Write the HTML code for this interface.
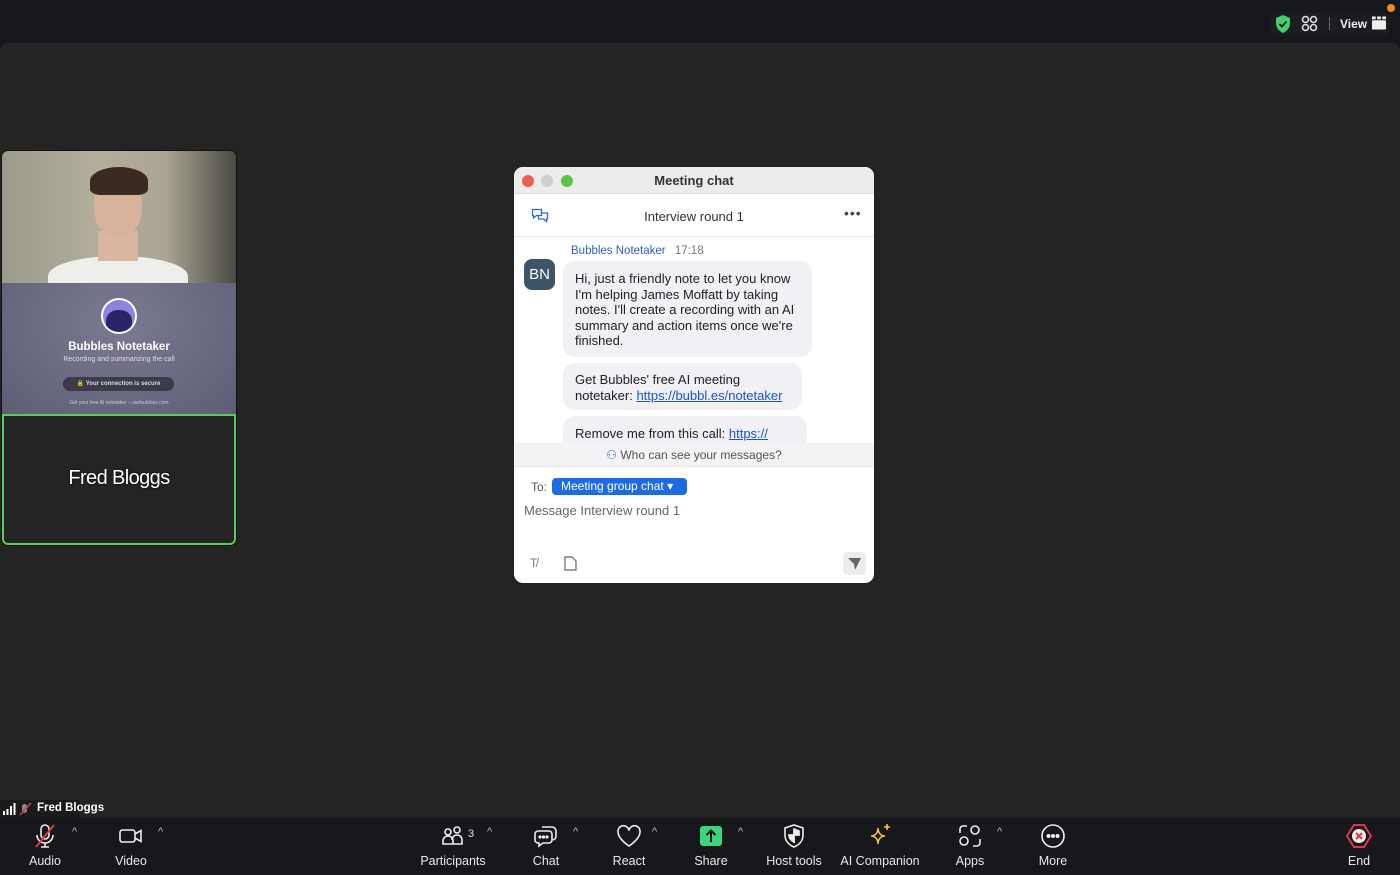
<!DOCTYPE html>
<html><head><meta charset="utf-8"><style>
*{box-sizing:border-box;margin:0;padding:0}
body{width:1400px;height:875px;background:#17181b;font-family:"Liberation Sans",sans-serif;position:relative;overflow:hidden;color:#fff}
.main{position:absolute;left:0;top:43px;width:1400px;height:775px;background:#242424;border-radius:8px 8px 0 0}
.abs{position:absolute}
.tb{position:absolute;top:818px;left:0;width:1400px;height:57px;background:#17181b}
.btn{position:absolute;top:822px;text-align:center;font-size:12.5px;color:#e8e8e8}
.btn svg{display:block;margin:0 auto 4px}
.car{position:absolute;top:826px;color:#bbb;font-size:11px}
.chat{position:absolute;left:514px;top:167px;width:360px;height:416px;background:#fff;border-radius:9px;overflow:hidden;color:#222}
.bub{position:absolute;left:49px;background:#f0f0f5;border-radius:12px;padding:0 12px;font-size:13px;line-height:15.5px;color:#222}
a{color:#1a55c9;text-decoration:underline}
</style></head><body>
<div class="main"></div>
<div class="abs" style="left:1271px;top:12px;width:118px;height:24px;background:#1c1d20;border-radius:6px"></div>
<svg class="abs" style="left:1274px;top:14px" width="18" height="20" viewBox="0 0 18 20"><path d="M9 1L16 4v5c0 5-3 8-7 10C5 17 2 14 2 9V4z" fill="#3ecf6e"/><path d="M5.5 10l2.5 2.5 4.5-5" stroke="#111" stroke-width="1.8" fill="none"/></svg>
<svg class="abs" style="left:1301px;top:15px" width="17" height="17" viewBox="0 0 17 17" fill="none" stroke="#ddd" stroke-width="1.6"><circle cx="4.5" cy="4.5" r="3"/><circle cx="12.5" cy="4.5" r="3"/><circle cx="4.5" cy="12.5" r="3"/><circle cx="12.5" cy="12.5" r="3"/></svg>
<div class="abs" style="left:1329px;top:17px;width:1px;height:13px;background:#666"></div>
<div class="abs" style="left:1340px;top:17px;font-size:12px;font-weight:bold;color:#eee">View</div>
<svg class="abs" style="left:1372px;top:16px" width="14" height="14" viewBox="0 0 15 14"><rect x="0" y="4" width="15" height="10" rx="1" fill="#eee"/><rect x="0" y="0" width="4" height="3" fill="#eee"/><rect x="5.5" y="0" width="4" height="3" fill="#eee"/><rect x="11" y="0" width="4" height="3" fill="#eee"/></svg>
<div class="abs" style="left:1387px;top:4px;width:8px;height:8px;border-radius:50%;background:#f08a24"></div>
<div class="abs" style="left:1px;top:150px;width:236px;height:396px;background:#111;border-radius:7px"></div>
<div class="abs" style="left:2px;top:151px;width:234px;height:132px;border-radius:6px 6px 0 0;overflow:hidden;background:linear-gradient(90deg,#9a9a8c,#b3ae9c 40%,#aaa594 70%,#4a4a44)">
 <div class="abs" style="left:46px;top:105px;width:140px;height:40px;border-radius:50% 50% 0 0;background:#eeeeea"></div>
 <div class="abs" style="left:96px;top:80px;width:40px;height:30px;background:#d9b6a0"></div>
 <div class="abs" style="left:92px;top:24px;width:48px;height:62px;border-radius:45%;background:#d9b29c"></div>
 <div class="abs" style="left:88px;top:16px;width:58px;height:28px;border-radius:50% 50% 20% 20%;background:#3a2a22"></div>
</div>
<div class="abs" style="left:2px;top:283px;width:234px;height:131px;background:radial-gradient(ellipse at 50% 30%,#7b7a92,#5e5d76)"></div>
<div class="abs" style="left:101px;top:298px;width:36px;height:36px;border-radius:50%;background:#fff"></div>
<div class="abs" style="left:103px;top:300px;width:32px;height:32px;border-radius:50%;background:#8f83e0;overflow:hidden"><div class="abs" style="left:3px;top:10px;width:26px;height:24px;border-radius:45%;background:#2a2566"></div></div>
<div class="abs" style="left:2px;top:341px;width:234px;text-align:center;font-size:11.5px;font-weight:bold">Bubbles Notetaker</div>
<div class="abs" style="left:2px;top:356px;width:234px;text-align:center;font-size:7px;color:#ddd">Recording and summarizing the call</div>
<div class="abs" style="left:63px;top:377px;width:111px;height:14px;border-radius:7px;background:#3b3b4c;font-size:6px;font-weight:bold;color:#ddd;text-align:center;line-height:14px">🔒 Your connection is secure</div>
<div class="abs" style="left:2px;top:400px;width:234px;text-align:center;font-size:5px;color:#ccc">Get your free AI notetaker – <span style="color:#c8c0ff">usebubbles.com</span></div>
<div class="abs" style="left:2px;top:414px;width:234px;height:131px;background:#242424;border:2px solid #5ccb5f;border-radius:0 0 6px 6px"></div>
<div class="abs" style="left:2px;top:467px;width:234px;text-align:center;font-size:20px;letter-spacing:-0.6px;text-shadow:0 0 2px #000">Fred Bloggs</div>
<div class="abs" style="left:0;top:800px;width:80px;height:18px;background:#1b1b1b"></div>
<svg class="abs" style="left:3px;top:803px" width="30" height="12" viewBox="0 0 30 12"><rect x="0" y="8" width="2" height="4" fill="#fff"/><rect x="3.5" y="6" width="2" height="6" fill="#fff"/><rect x="7" y="3" width="2" height="9" fill="#fff"/><rect x="10.5" y="0" width="2" height="12" fill="#fff"/><rect x="19" y="1" width="5" height="9" rx="2.5" fill="#888"/><path d="M17 12L28 0" stroke="#e0364a" stroke-width="1.5"/></svg>
<div class="abs" style="left:37px;top:802px;font-size:11.5px;font-weight:bold">Fred Bloggs</div>
<div class="chat">
 <div class="abs" style="left:0;top:0;width:360px;height:27px;background:#ececec;border-bottom:1px solid #ddd"></div>
 <div class="abs" style="left:8px;top:8px;width:12px;height:12px;border-radius:50%;background:#ee5c55"></div>
 <div class="abs" style="left:27px;top:8px;width:12px;height:12px;border-radius:50%;background:#cfcfcf"></div>
 <div class="abs" style="left:47px;top:8px;width:12px;height:12px;border-radius:50%;background:#5ac543"></div>
 <div class="abs" style="left:0;top:6px;width:360px;text-align:center;font-size:13px;font-weight:bold;color:#333">Meeting chat</div>
 <svg class="abs" style="left:17px;top:40px" width="18" height="18" viewBox="0 0 18 18" fill="none" stroke="#2d6ad8" stroke-width="1.3"><path d="M1.5 2.5h9v6h-5l-3 2.5v-2.5h-1z"/><path d="M10.5 6h6v6h-1v2.5l-3-2.5h-5v-3.5"/></svg>
 <div class="abs" style="left:0;top:42px;width:360px;text-align:center;font-size:13px;color:#333">Interview round 1</div>
 <div class="abs" style="left:330px;top:38px;font-size:14px;color:#444;letter-spacing:1px">•••</div>
 <div class="abs" style="left:0;top:69px;width:360px;height:1px;background:#e6e6e6"></div>
 <div class="abs" style="left:57px;top:78px;font-size:11.5px;color:#2b5fb8">Bubbles Notetaker <span style="color:#777;margin-left:6px">17:18</span></div>
 <div class="abs" style="left:10px;top:92px;width:31px;height:31px;border-radius:8px;background:#3f5369;color:#fff;font-size:15px;text-align:center;line-height:31px">BN</div>
 <div class="bub" style="top:94px;width:249px;height:96px;padding-top:10px">Hi, just a friendly note to let you know I'm helping James Moffatt by taking notes. I'll create a recording with an AI summary and action items once we're finished.</div>
 <div class="bub" style="top:196px;width:239px;height:47px;padding-top:9px">Get Bubbles' free AI meeting notetaker: <a>https://bubbl.es/notetaker</a></div>
 <div class="bub" style="top:249px;width:244px;height:40px;padding-top:10px">Remove me from this call: <a>https://</a></div>
 <div class="abs" style="left:0;top:276px;width:360px;height:24px;background:#f3f3f6;border-bottom:1px solid #e6e6e6;text-align:center;font-size:12px;color:#555;line-height:24px"><span style="color:#2d6ad8">⚇</span> Who can see your messages?</div>
 <div class="abs" style="left:17px;top:313px;font-size:12px;color:#555">To:</div>
 <div class="abs" style="left:38px;top:311px;width:135px;height:17px;border-radius:4px;background:#1c6be0;color:#fff;font-size:12px;line-height:17px;padding-left:9px">Meeting group chat ▾</div>
 <div class="abs" style="left:10px;top:336px;font-size:13px;color:#666">Message Interview round 1</div>
 <div class="abs" style="left:16px;top:389px;font-size:12px;color:#777">T̸</div>
 <svg class="abs" style="left:50px;top:389px" width="13" height="15" viewBox="0 0 13 15" fill="none" stroke="#666" stroke-width="1.2"><path d="M1 1h7l4 4v9H1z"/></svg>
 <div class="abs" style="left:329px;top:385px;width:23px;height:23px;border-radius:5px;background:#ececef"></div>
 <svg class="abs" style="left:334px;top:391px" width="13" height="12" viewBox="0 0 13 12"><path d="M0 0h13L7 12 6 6z" fill="#666"/></svg>
</div>
<div class="tb"></div>
<div class="btn" style="left:20px;width:50px"><svg width="28" height="28" viewBox="0 0 28 28" fill="none" stroke="#eee" stroke-width="1.6"><rect x="10" y="3" width="8" height="14" rx="4"/><path d="M6 13a8 8 0 0016 0M14 21v4M10 25h8"/><path d="M5 25L23 3" stroke="#e0364a" stroke-width="2"/></svg>Audio</div>
<div class="car" style="left:72px">^</div>
<div class="btn" style="left:106px;width:50px"><svg width="28" height="28" viewBox="0 0 28 28" fill="none" stroke="#eee" stroke-width="1.6"><rect x="3" y="8" width="15" height="12" rx="2.5"/><path d="M18 12l6-3.5v11L18 16"/></svg>Video</div>
<div class="car" style="left:158px">^</div>
<div class="btn" style="left:418px;width:70px"><svg width="28" height="28" viewBox="0 0 28 28" fill="none" stroke="#eee" stroke-width="1.6"><circle cx="9" cy="10" r="3"/><circle cx="18" cy="8" r="3"/><path d="M4 22v-3a5 5 0 0110 0v3z"/><path d="M13 18a5 5 0 0110 0v4h-9"/></svg>Participants</div>
<div class="abs" style="left:468px;top:828px;font-size:11px;color:#ddd">3</div>
<div class="car" style="left:487px">^</div>
<div class="btn" style="left:521px;width:50px"><svg width="28" height="28" viewBox="0 0 28 28" fill="none" stroke="#eee" stroke-width="1.6"><path d="M10 5h10a4 4 0 014 4v5a4 4 0 01-3 4"/><path d="M6 9h11a3 3 0 013 3v6a3 3 0 01-3 3h-6l-4 3v-3H6a3 3 0 01-3-3v-6a3 3 0 013-3z"/><circle cx="8" cy="15" r=".8" fill="#eee"/><circle cx="11.5" cy="15" r=".8" fill="#eee"/><circle cx="15" cy="15" r=".8" fill="#eee"/></svg>Chat</div>
<div class="car" style="left:573px">^</div>
<div class="btn" style="left:604px;width:50px"><svg width="28" height="28" viewBox="0 0 28 28" fill="none" stroke="#eee" stroke-width="1.6"><path d="M14 24S3 17 3 10a5.5 5.5 0 0111-1.5A5.5 5.5 0 0125 10c0 7-11 14-11 14z"/></svg>React</div>
<div class="car" style="left:652px">^</div>
<div class="btn" style="left:686px;width:50px"><svg width="28" height="28" viewBox="0 0 28 28"><rect x="3" y="4" width="22" height="20" rx="3" fill="#3ed47a"/><path d="M14 20V9M9.5 13L14 8.5 18.5 13" stroke="#111" stroke-width="2" fill="none"/></svg>Share</div>
<div class="car" style="left:738px">^</div>
<div class="btn" style="left:762px;width:64px"><svg width="28" height="28" viewBox="0 0 28 28" fill="none" stroke="#eee" stroke-width="1.6"><path d="M14 3l9 3v7c0 6-4 10-9 12-5-2-9-6-9-12V6z"/><path d="M14 7v14M8 13h12" /><path d="M14 7l5 2v4h-5zM9 13h5v7c-3-1.5-5-4-5-7z" fill="#eee"/></svg>Host tools</div>
<div class="btn" style="left:840px;width:80px"><svg width="28" height="28" viewBox="0 0 28 28" fill="none" stroke="#f4c542" stroke-width="1.6"><path d="M12 6c0 5-3 8-7 8 4 0 7 3 7 8 0-5 3-8 7-8-4 0-7-3-7-8z"/><path d="M21 2v6M18 5h6"/></svg>AI Companion</div>
<div class="btn" style="left:945px;width:50px"><svg width="28" height="28" viewBox="0 0 28 28" fill="none" stroke="#eee" stroke-width="1.6"><path d="M4 11V7a3 3 0 013-3h4M24 17v4a3 3 0 01-3 3h-4"/><circle cx="19" cy="8" r="4"/><circle cx="8" cy="19" r="4"/></svg>Apps</div>
<div class="car" style="left:997px">^</div>
<div class="btn" style="left:1028px;width:50px"><svg width="28" height="28" viewBox="0 0 28 28" fill="none" stroke="#eee" stroke-width="1.6"><circle cx="14" cy="14" r="11"/><circle cx="9.5" cy="14" r="1.2" fill="#eee"/><circle cx="14" cy="14" r="1.2" fill="#eee"/><circle cx="18.5" cy="14" r="1.2" fill="#eee"/></svg>More</div>
<div class="btn" style="left:1334px;width:50px"><svg width="28" height="28" viewBox="0 0 28 28"><path d="M9 3h10l7 11-7 11H9L2 14z" fill="none" stroke="#e0364a" stroke-width="2"/><circle cx="14" cy="14" r="7" fill="#eee"/><path d="M11 11l6 6M17 11l-6 6" stroke="#e0364a" stroke-width="2"/></svg>End</div>
</body></html>
